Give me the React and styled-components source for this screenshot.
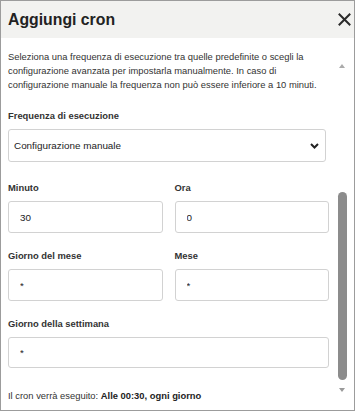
import React from 'react';
import styled, { createGlobalStyle } from 'styled-components';

const Global = createGlobalStyle`
  html, body { margin: 0; padding: 0; background: #fff; }
  body { font-family: "Liberation Sans", Arial, sans-serif; color: #333; }
  * { box-sizing: border-box; }
`;

const Dialog = styled.div`
  width: 355px;
  height: 411px;
  border: 1px solid #9c9c9c;
  display: flex;
  flex-direction: column;
  background: #fff;
  overflow: hidden;
`;

const Header = styled.div`
  flex: none;
  height: 37px;
  background: #f2f2f0;
  display: flex;
  align-items: center;
  justify-content: space-between;
  padding: 0 3px 0 7px;
`;

const Title = styled.h2`
  margin: 0;
  font-size: 15.8px;
  font-weight: 700;
  color: #222;
`;

const CloseButton = styled.button`
  border: 0;
  background: none;
  padding: 0;
  width: 14px;
  height: 14px;
  display: flex;
  align-items: center;
  justify-content: center;
  color: #2a2a2a;
  cursor: pointer;
`;

const Body = styled.div`
  flex: 1;
  min-height: 0;
  display: flex;
  gap: 7px;
  padding: 0 5px 0 7px;
`;

const Content = styled.div`
  width: 321px;
  flex: none;
  padding-top: 12px;
  display: flex;
  flex-direction: column;
`;

const Description = styled.p`
  margin: 0;
  font-size: 9.4px;
  line-height: 14px;
  color: #333;
`;

const Field = styled.div`
  display: flex;
  flex-direction: column;
  gap: 6px;
  margin-top: ${p => p.$mt || 0}px;
`;

const Row = styled.div`
  display: grid;
  grid-template-columns: 1fr 1fr;
  column-gap: 12px;
  margin-top: ${p => p.$mt || 0}px;
`;

const Label = styled.label`
  font-size: 9.4px;
  line-height: 14px;
  font-weight: 700;
  color: #333;
`;

const SelectBox = styled.div`
  width: 318px;
  height: 33px;
  border: 1px solid #d2d2d2;
  border-radius: 3px;
  display: flex;
  align-items: center;
  justify-content: space-between;
  padding: 0 6px 0 5px;
  font-size: 9.9px;
  color: #222;
  background: #fff;
`;

const Input = styled.input`
  width: 100%;
  height: ${p => p.$h || 32}px;
  border: 1px solid #d2d2d2;
  border-radius: 3px;
  padding: 0 11px;
  font-family: "Liberation Sans", Arial, sans-serif;
  font-size: 9.9px;
  color: #222;
  background: #fff;
  outline: none;
`;

const Summary = styled.p`
  margin: 21px 0 0;
  font-size: 9.4px;
  line-height: 14px;
  color: #333;
  white-space: nowrap;
  strong { font-weight: 700; color: #222; }
`;

const ScrollBar = styled.div`
  width: 12px;
  flex: none;
  display: flex;
  flex-direction: column;
  align-items: center;
  padding: 26px 0 18px;
`;

const Arrow = styled.div`
  width: 0;
  height: 0;
  border-left: 3.5px solid transparent;
  border-right: 3.5px solid transparent;
  ${p => p.$down
    ? 'border-top: 4px solid #9a9a9a;'
    : 'border-bottom: 4px solid #ababab;'}
`;

const Thumb = styled.div`
  margin-top: auto;
  margin-bottom: 8px;
  width: 9px;
  height: 188px;
  border-radius: 5px;
  background: #8c8c8c;
`;

export default function App() {
  return (
    <>
      <Global />
      <Dialog>
        <Header>
          <Title>Aggiungi cron</Title>
          <CloseButton aria-label="Chiudi">
            <svg width="13" height="13" viewBox="0 0 13 13">
              <path d="M1.5 1.5 L11.5 11.5 M11.5 1.5 L1.5 11.5" stroke="currentColor" strokeWidth="2" strokeLinecap="square" fill="none" />
            </svg>
          </CloseButton>
        </Header>
        <Body>
          <Content>
            <Description>
              Seleziona una frequenza di esecuzione tra quelle predefinite o scegli la configurazione avanzata per impostarla manualmente. In caso di configurazione manuale la frequenza non può essere inferiore a 10 minuti.
            </Description>
            <Field $mt={17}>
              <Label>Frequenza di esecuzione</Label>
              <SelectBox>
                <span>Configurazione manuale</span>
                <svg width="9" height="6" viewBox="0 0 9 6">
                  <path d="M1 1 L4.5 4.5 L8 1" stroke="#222" strokeWidth="2" fill="none" />
                </svg>
              </SelectBox>
            </Field>
            <Row $mt={19}>
              <Field>
                <Label>Minuto</Label>
                <Input defaultValue="30" readOnly />
              </Field>
              <Field>
                <Label>Ora</Label>
                <Input defaultValue="0" readOnly />
              </Field>
            </Row>
            <Row $mt={16}>
              <Field>
                <Label>Giorno del mese</Label>
                <Input defaultValue="*" readOnly />
              </Field>
              <Field>
                <Label>Mese</Label>
                <Input defaultValue="*" readOnly />
              </Field>
            </Row>
            <Field $mt={16}>
              <Label>Giorno della settimana</Label>
              <Input defaultValue="*" readOnly $h={31} />
            </Field>
            <Summary>
              Il cron verrà eseguito: <strong>Alle 00:30, ogni giorno</strong>
            </Summary>
          </Content>
          <ScrollBar>
            <Arrow />
            <Thumb />
            <Arrow $down />
          </ScrollBar>
        </Body>
      </Dialog>
    </>
  );
}
